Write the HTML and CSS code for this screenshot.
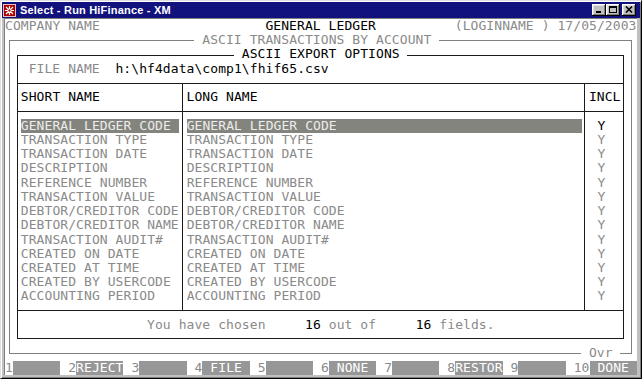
FILE: index.html
```html
<!DOCTYPE html>
<html lang="en">
<head>
<meta charset="utf-8">
<title>Select - Run HiFinance - XM</title>
<link rel="stylesheet" href="styles.css">
</head>
<body>
<div class="window">
  <div class="titlebar">
    <svg class="app-icon" viewBox="0 0 13 13" aria-hidden="true">
      <rect x="0" y="0" width="13" height="13" fill="#b00000"/>
      <rect x="0.5" y="0.5" width="12" height="12" fill="none" stroke="#e8c0c0" stroke-width="1"/>
      <path d="M3 3 L10 10 M10 3 L3 10 M6.5 2 V11 M2 6.5 H11" stroke="#fff" stroke-width="1.2"/>
      <circle cx="6.5" cy="6.5" r="1.6" fill="#b00000" stroke="#fff" stroke-width="1"/>
    </svg>
    <span class="title-text">Select - Run HiFinance - XM</span>
    <div class="title-buttons">
      <span class="tbtn"><svg viewBox="0 0 8 7" class="glyph"><rect x="1" y="5" width="5" height="2" fill="#000"/></svg></span>
      <span class="tbtn"><svg viewBox="0 0 8 7" class="glyph"><rect x="0.5" y="0.5" width="7" height="6" fill="none" stroke="#000"/><rect x="0" y="0" width="8" height="2" fill="#000"/></svg></span>
      <span class="tbtn tbtn-close"><svg viewBox="0 0 8 7" class="glyph"><path d="M1 0.5 L7 6.5 M7 0.5 L1 6.5" stroke="#000" stroke-width="1.6"/></svg></span>
    </div>
  </div>

  <div class="client">
    <div class="screen">
      <div class="box box-outer"></div>
      <div class="box box-inner"></div>
      <div class="hline hline-top"></div>
      <div class="hline hline-head"></div>
      <div class="hline hline-foot"></div>
      <div class="vline vline-name"></div>
      <div class="vline vline-incl"></div>

      <span class="t dim company">COMPANY NAME</span>
      <span class="t heading">GENERAL LEDGER</span>
      <span class="t dim login">(LOGINNAME ) 17/05/2003</span>

      <span class="t dim legend legend-outer"> ASCII TRANSACTIONS BY ACCOUNT </span>
      <span class="t legend legend-inner"> ASCII EXPORT OPTIONS </span>

      <span class="t dim file-label">FILE NAME</span>
      <span class="t file-path">h:\hf4data\comp1\fhif65.csv</span>

      <span class="t col-short">SHORT NAME</span>
      <span class="t col-long">LONG NAME</span>
      <span class="t col-incl">INCL</span>

      <div class="rows">
        <div class="row sel"><span class="short">GENERAL LEDGER CODE</span><span class="long">GENERAL LEDGER CODE</span><span class="incl">Y</span></div>
        <div class="row"><span class="short">TRANSACTION TYPE</span><span class="long">TRANSACTION TYPE</span><span class="incl">Y</span></div>
        <div class="row"><span class="short">TRANSACTION DATE</span><span class="long">TRANSACTION DATE</span><span class="incl">Y</span></div>
        <div class="row"><span class="short">DESCRIPTION</span><span class="long">DESCRIPTION</span><span class="incl">Y</span></div>
        <div class="row"><span class="short">REFERENCE NUMBER</span><span class="long">REFERENCE NUMBER</span><span class="incl">Y</span></div>
        <div class="row"><span class="short">TRANSACTION VALUE</span><span class="long">TRANSACTION VALUE</span><span class="incl">Y</span></div>
        <div class="row"><span class="short">DEBTOR/CREDITOR CODE</span><span class="long">DEBTOR/CREDITOR CODE</span><span class="incl">Y</span></div>
        <div class="row"><span class="short">DEBTOR/CREDITOR NAME</span><span class="long">DEBTOR/CREDITOR NAME</span><span class="incl">Y</span></div>
        <div class="row"><span class="short">TRANSACTION AUDIT#</span><span class="long">TRANSACTION AUDIT#</span><span class="incl">Y</span></div>
        <div class="row"><span class="short">CREATED ON DATE</span><span class="long">CREATED ON DATE</span><span class="incl">Y</span></div>
        <div class="row"><span class="short">CREATED AT TIME</span><span class="long">CREATED AT TIME</span><span class="incl">Y</span></div>
        <div class="row"><span class="short">CREATED BY USERCODE</span><span class="long">CREATED BY USERCODE</span><span class="incl">Y</span></div>
        <div class="row"><span class="short">ACCOUNTING PERIOD</span><span class="long">ACCOUNTING PERIOD</span><span class="incl">Y</span></div>
      </div>

      <span class="t dim summary">You have chosen     <b>16</b> out of     <b>16</b> fields.</span>

      <span class="t dim legend ovr"> Ovr </span>

      <div class="fkeys">
        <span class="key"><span class="num">1</span><span class="cap"></span></span>
        <span class="key"><span class="num">2</span><span class="cap">REJECT</span></span>
        <span class="key"><span class="num">3</span><span class="cap"></span></span>
        <span class="key"><span class="num">4</span><span class="cap"> FILE </span></span>
        <span class="key"><span class="num">5</span><span class="cap"></span></span>
        <span class="key"><span class="num">6</span><span class="cap"> NONE </span></span>
        <span class="key"><span class="num">7</span><span class="cap"></span></span>
        <span class="key"><span class="num">8</span><span class="cap">RESTOR</span></span>
        <span class="key"><span class="num">9</span><span class="cap"></span></span>
        <span class="key"><span class="num">10</span><span class="cap"> DONE </span></span>
      </div>
    </div>
  </div>
</div>
</body>
</html>
```

FILE: styles.css
```css
:root {
  --cw: 7.9px;
  --rh: 14.24px;
  --dim: #8a8a8a;
}

* { box-sizing: border-box; }

html, body {
  margin: 0;
  padding: 0;
  background: #c0c0c0;
}

body {
  width: 642px;
  height: 379px;
  overflow: hidden;
}

.window {
  width: 642px;
  height: 379px;
  background: #c0c0c0;
  border: 1px solid;
  border-color: #dfdfdf #000 #000 #dfdfdf;
  box-shadow: inset 1px 1px #fff, inset -1px -1px #808080;
  padding: 1px;
  display: flex;
  flex-direction: column;
}

/* ---------- title bar ---------- */
.titlebar {
  height: 16px;
  flex: none;
  background: #12127f;
  color: #fff;
  display: flex;
  align-items: center;
  padding: 0 2px 0 1px;
}

.app-icon {
  width: 13px;
  height: 13px;
  flex: none;
}

.title-text {
  font: bold 11px "Liberation Sans", Arial, sans-serif;
  margin-left: 4px;
  letter-spacing: 0.2px;
}

.title-buttons {
  margin-left: auto;
  margin-right: 2px;
  display: flex;
}

.tbtn {
  width: 14px;
  height: 12px;
  background: #c0c0c0;
  box-shadow: inset -1px -1px #000, inset 1px 1px #fff, inset -2px -2px #808080, inset 2px 2px #dfdfdf;
  display: flex;
  align-items: center;
  justify-content: center;
  padding-bottom: 1px;
}

.tbtn-close { margin-left: 2px; }

.glyph {
  width: 8px;
  height: 7px;
  display: block;
}

/* ---------- terminal client ---------- */
.client {
  margin-left: 2px;
  width: 633px;
  height: 357px;
  border-top: 1px solid #808080;
  border-left: 1px solid #808080;
  background: #fff;
}

.screen {
  display: grid;
  grid-template-columns: repeat(80, var(--cw));
  grid-template-rows: repeat(25, var(--rh));
  width: 632px;
  height: 356px;
  font: 13px/14.24px "DejaVu Sans Mono", "Liberation Mono", monospace;
  letter-spacing: 0.073px;
  color: #000;
  white-space: pre;
}

.t { grid-row: 1; }
.dim { color: var(--dim); }
.t b { font-weight: normal; color: #000; }

/* frames */
.box {
  margin: calc(var(--rh) / 2) calc(var(--cw) / 2);
}

.box-outer {
  grid-column: 1 / 81;
  grid-row: 2 / 25;
  border: 1px solid #808080;
}

.box-inner {
  grid-column: 2 / 80;
  grid-row: 3 / 24;
  border: 1px solid #1a1a1a;
}

.hline {
  grid-column: 2 / 80;
  align-self: center;
  height: 0;
  margin: 0 calc(var(--cw) / 2);
  border-top: 1px solid #1a1a1a;
}
.hline-top { grid-row: 5; }
.hline-head { grid-row: 7; }
.hline-foot { grid-row: 21; }

.vline {
  grid-row: 5 / 22;
  justify-self: center;
  width: 0;
  margin: calc(var(--rh) / 2) 0;
  border-left: 1px solid #1a1a1a;
}
.vline-name { grid-column: 23; }
.vline-incl { grid-column: 74; }

/* header line */
.company { grid-column: 1; }
.heading { grid-column: 34; }
.login { grid-column: 58; }

.legend { background: #fff; }
.legend-outer { grid-row: 2; grid-column: 25 / span 31; }
.legend-inner { grid-row: 3; grid-column: 30 / span 22; }

.file-label { grid-row: 4; grid-column: 4; }
.file-path { grid-row: 4; grid-column: 15; }

.col-short { grid-row: 6; grid-column: 3; }
.col-long { grid-row: 6; grid-column: 24; }
.col-incl { grid-row: 6; grid-column: 75; }

/* field rows */
.rows {
  grid-column: 3 / 80;
  grid-row: 8 / 21;
  display: flex;
  flex-direction: column;
}

.row {
  display: grid;
  grid-template-columns: calc(var(--cw) * 20) var(--cw) calc(var(--cw) * 50) var(--cw) calc(var(--cw) * 5);
  height: var(--rh);
  color: var(--dim);
}

.row .short { grid-column: 1; }
.row .long { grid-column: 3; }
.row .incl { grid-column: 5; padding-left: var(--cw); }

.row.sel .short,
.row.sel .long {
  background: #84847e;
  color: #ececec;
}
.row.sel .incl { color: #000; }

.summary { grid-row: 22; grid-column: 19; }

.ovr { grid-row: 24; grid-column: 74 / span 5; }

/* function keys */
.fkeys {
  grid-row: 25;
  grid-column: 1 / 81;
  display: flex;
}

.key {
  display: flex;
  margin-right: var(--cw);
}
.key:last-child { margin-right: 0; }

.num { color: var(--dim); }

.cap {
  width: calc(var(--cw) * 6);
  background: #979797;
  color: #fff;
  overflow: hidden;
}
```
